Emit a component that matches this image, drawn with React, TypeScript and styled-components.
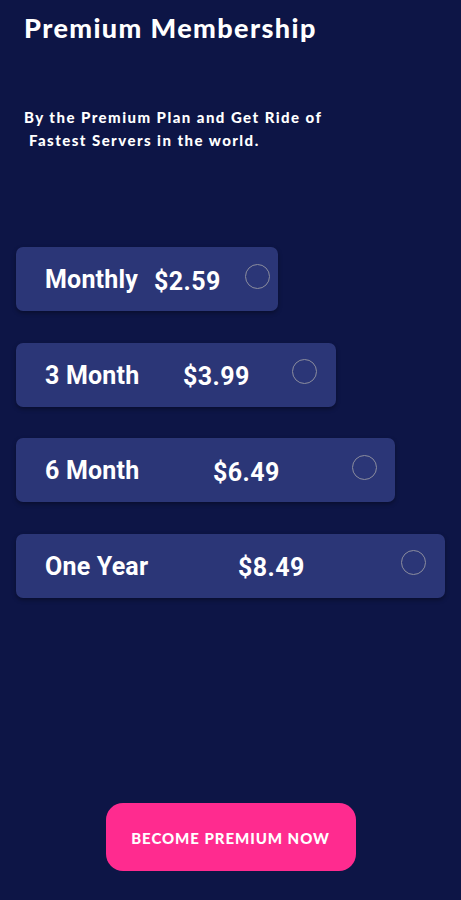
import styled, { createGlobalStyle } from "styled-components";

const GlobalStyle = createGlobalStyle`
  html, body {
    margin: 0;
    padding: 0;
    background-color: #0d1546;
  }
  * {
    box-sizing: border-box;
  }
`;

interface Plan {
  id: string;
  name: string;
  price: string;
  width: number;
  labelWidth: number;
  radioGap: number;
}

const plans: Plan[] = [
  { id: "monthly", name: "Monthly", price: "$2.59", width: 262, labelWidth: 109, radioGap: 8 },
  { id: "3m", name: "3 Month", price: "$3.99", width: 320, labelWidth: 138, radioGap: 19 },
  { id: "6m", name: "6 Month", price: "$6.49", width: 379, labelWidth: 168, radioGap: 18 },
  { id: "1y", name: "One Year", price: "$8.49", width: 429, labelWidth: 193, radioGap: 19 },
];

const PlanCard = (props: { plan: Plan }) => {
  const { plan } = props;

  return (
    <Card $width={plan.width} $radioGap={plan.radioGap}>
      <PlanName $width={plan.labelWidth}>{plan.name}</PlanName>
      <Price>{plan.price}</Price>
      <Radio />
    </Card>
  );
};

export default function App() {
  return (
    <Page>
      <GlobalStyle />
      <Title>Premium Membership</Title>
      <Subtitle>
        By the Premium Plan and Get Ride of
        <br />
        &nbsp;Fastest Servers in the world.
      </Subtitle>
      <PlanList>
        {plans.map((p) => (
          <PlanCard key={p.id} plan={p} />
        ))}
      </PlanList>
      <Footer>
        <PremiumButton>BECOME PREMIUM NOW</PremiumButton>
      </Footer>
    </Page>
  );
}

const Page = styled.div`
  min-height: 100vh;
  display: flex;
  flex-direction: column;
  background-color: #0d1546;
  padding: 0 0 29px 0;
  color: #ffffff;
`;

const Title = styled.h1`
  margin: 0;
  padding: 11px 0 0 24px;
  font-family: Lato, "Open Sans", sans-serif;
  font-weight: 900;
  font-size: 27px;
  line-height: 34px;
  letter-spacing: 1.4px;
`;

const Subtitle = styled.p`
  margin: 61px 0 0 0;
  padding-left: 24px;
  font-family: Lato, "Open Sans", sans-serif;
  font-weight: 900;
  font-size: 15px;
  line-height: 23px;
  letter-spacing: 1.45px;
`;

const PlanList = styled.ul`
  list-style: none;
  margin: 95px 0 0 0;
  padding: 0 0 0 16px;
  display: flex;
  flex-direction: column;
  gap: 31.5px;
`;

const Card = styled.li<{ $width: number; $radioGap: number }>`
  width: ${(p) => p.$width}px;
  height: 64px;
  display: flex;
  align-items: center;
  padding: 0 ${(p) => p.$radioGap}px 0 29px;
  background-color: #2b3677;
  border-radius: 7px;
  box-shadow: 0 2px 4px rgba(0, 0, 0, 0.35);
`;

const PlanName = styled.span<{ $width: number }>`
  width: ${(p) => p.$width}px;
  flex-shrink: 0;
  font-family: Roboto, "Liberation Sans", sans-serif;
  font-weight: 700;
  font-size: 25px;
  letter-spacing: 0.2px;
  margin-top: 1px;
`;

const Price = styled.span`
  font-family: Roboto, "Liberation Sans", sans-serif;
  font-weight: 700;
  font-size: 25px;
  letter-spacing: 0.4px;
  margin-top: 4px;
`;

const Radio = styled.span`
  margin-left: auto;
  width: 25px;
  height: 25px;
  margin-bottom: 6px;
  border-radius: 50%;
  border: 1.5px solid #8b8d9e;
  flex-shrink: 0;
`;

const Footer = styled.div`
  margin-top: auto;
  display: flex;
  justify-content: center;
`;

const PremiumButton = styled.button`
  width: 250px;
  height: 68px;
  border: none;
  border-radius: 17px;
  background-color: #ff2b8f;
  color: #ffffff;
  font-family: Lato, "Open Sans", sans-serif;
  font-weight: 900;
  font-size: 15px;
  letter-spacing: 0.95px;
  padding: 2px 0 0 0;
  cursor: pointer;
`;
